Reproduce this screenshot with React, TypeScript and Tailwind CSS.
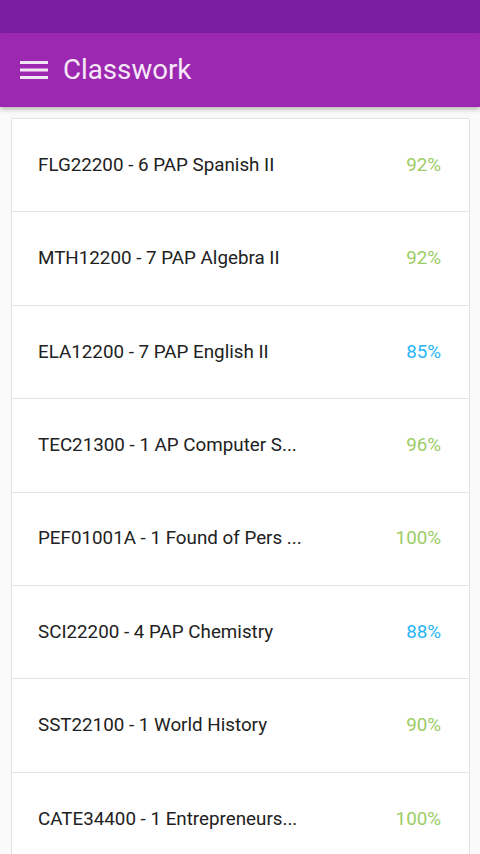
import React from "react";

const rows = [
  { name: "FLG22200 - 6 PAP Spanish II", pct: "92%", c: "green" },
  { name: "MTH12200 - 7 PAP Algebra II", pct: "92%", c: "green" },
  { name: "ELA12200 - 7 PAP English II", pct: "85%", c: "blue" },
  { name: "TEC21300 - 1 AP Computer S...", pct: "96%", c: "green" },
  { name: "PEF01001A - 1 Found of Pers ...", pct: "100%", c: "green" },
  { name: "SCI22200 - 4 PAP Chemistry", pct: "88%", c: "blue" },
  { name: "SST22100 - 1 World History", pct: "90%", c: "green" },
  { name: "CATE34400 - 1 Entrepreneurs...", pct: "100%", c: "green" },
];

export default function App() {
  return (
    <div className="w-[480px] h-[854px] overflow-hidden bg-[#fafafa] flex flex-col" style={{ fontFamily: "Roboto, 'Noto Sans', sans-serif" }}>
      <div className="h-[33px] bg-[#7b1fa2] shrink-0" />
      <div className="relative z-10 h-[74px] shrink-0 bg-[#9c27b0] flex items-center shadow-[0_2px_5px_rgba(0,0,0,0.3)]">
        <svg width="28" height="20" viewBox="0 0 28 20" className="ml-[20px]">
          <rect x="0" y="1" width="28" height="3" fill="#f3e5f5" />
          <rect x="0" y="8.5" width="28" height="3" fill="#f3e5f5" />
          <rect x="0" y="16" width="28" height="3" fill="#f3e5f5" />
        </svg>
        <span className="ml-[15px] text-[27.7px] text-[#f6e8f8] leading-none">Classwork</span>
      </div>
      <div className="ml-[11px] mt-[11px] w-[459px] bg-white border-x border-b border-[#e2e2e2] rounded-[2px] flex flex-col">
        {rows.map((r, i) => (
          <div
            key={i}
            className="h-[93.4px] shrink-0 flex items-center justify-between pl-[26px] pr-[28px] border-t border-[#e4e4e4]"
          >
            <span className="text-[18.8px] text-[#212121] leading-none">{r.name}</span>
            <span className={`text-[18.8px] leading-none ${r.c === "green" ? "text-[#9ccc65]" : "text-[#29b6f6]"}`}>{r.pct}</span>
          </div>
        ))}
      </div>
    </div>
  );
}
